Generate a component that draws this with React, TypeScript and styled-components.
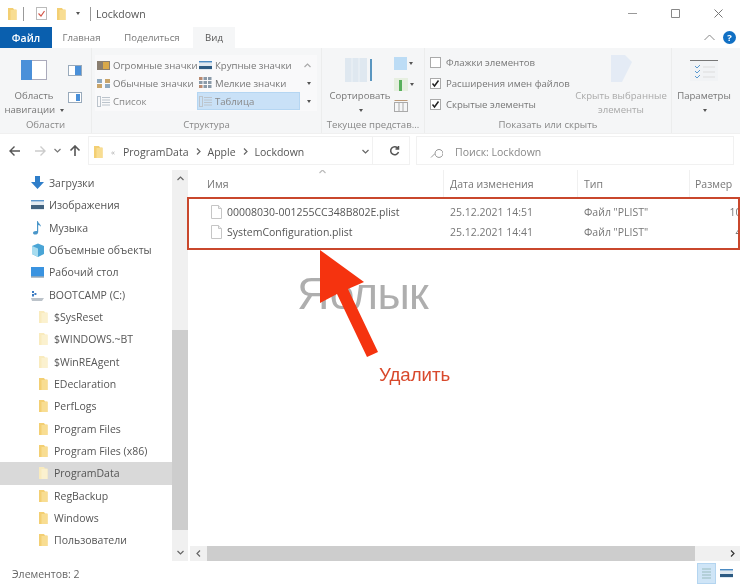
import React from "react";
import styled, { createGlobalStyle } from "styled-components";

const Global = createGlobalStyle`
  html, body { margin: 0; padding: 0; background: #fff; }
  body { font-family: "Open Sans", "Noto Sans", sans-serif; color: #444; }
  * { box-sizing: border-box; }
`;

const Win = styled.div`
  position: relative; width: 740px; height: 584px; overflow: hidden; background: #fff;
  display: flex; flex-direction: column; font-size: 10.5px; filter: blur(0.35px);
`;
const TitleBar = styled.div`
  height: 27px; display: flex; align-items: center; padding-left: 7px; flex: none;
`;
const TitleSep = styled.span`width: 1px; height: 14px; background: #999; margin: 0 ${p => p.$r ?? 10}px 0 ${p => p.$l ?? 7}px;`;
const TitleText = styled.span`font-size: 10.5px; color: #555;`;
const TitleGap = styled.span<{ $w: number }>`width: ${p => p.$w}px; flex: none;`;
const WinControls = styled.div`margin-left: auto; display: flex; align-items: center; padding-right: 0;`;
const WinButton = styled.span`width: 43px; height: 27px; display: flex; align-items: center; justify-content: center;`;

const TabBar = styled.div`height: 21px; display: flex; align-items: stretch; flex: none; position: relative;`;
const FileTab = styled.div`
  width: 52px; background: #0a5fae; color: #fff; font-weight: 600; display: flex; align-items: center; justify-content: center; font-size: 10.5px;
`;
const Tab = styled.div<{ $active?: boolean; $w: number }>`
  display: flex; align-items: center; justify-content: center; width: ${p => p.$w}px; color: ${p => p.$active ? "#555" : "#777"};
  background: ${p => p.$active ? "#f5f6f7" : "transparent"};
  font-size: 9.6px;
`;
const TabRight = styled.div`margin-left: auto; display: flex; align-items: center; gap: 8px; padding-right: 4px;`;
const HelpDot = styled.span`
  width: 13px; height: 13px; border-radius: 50%; background: #1170c4; color: #fff; font-size: 9.5px; font-weight: 700;
  display: flex; align-items: center; justify-content: center;
`;

const Ribbon = styled.div`
  height: 86px; background: #f5f6f7; display: flex; flex: none; border-bottom: 1px solid #f0f0f0; font-size: 9.6px;
`;
const Group = styled.div<{ $w: number; $last?: boolean }>`
  width: ${p => p.$w}px; flex: none; display: flex; flex-direction: column; height: 100%;
  border-right: ${p => p.$last ? "none" : "1px solid #eceded"}; position: relative;
`;
const GroupBody = styled.div`flex: 1; display: flex; min-height: 0;`;
const GroupLabel = styled.div`height: 16px; text-align: center; line-height: 16px; color: #888; white-space: nowrap;`;

const BigButton = styled.div<{ $w: number; $top: number; $left?: number; $dim?: boolean }>`
  width: ${p => p.$w}px; flex: none; display: flex; flex-direction: column; align-items: center;
  padding-top: ${p => p.$top}px; margin-left: ${p => p.$left ?? 0}px;
  color: ${p => p.$dim ? "#aaa" : "#777"}; text-align: center; line-height: 14px;
`;
const BigLabel = styled.div<{ $top: number }>`margin-top: ${p => p.$top}px; white-space: nowrap;`;
const PaneColumn = styled.div`display: flex; flex-direction: column; gap: 16px; padding-top: 17px;`;
const Caret = styled.i`
  display: inline-block; border: 2px solid transparent; border-top: 3px solid #555; border-bottom: 0; vertical-align: middle; margin-left: 2px;
`;

const Gallery = styled.div`
  margin: 7px 0 0 3px; width: 222px; height: 56px; display: grid; grid-template-columns: 102px 103px 15px; grid-auto-rows: 18px;
  background: #f9f9fa; padding-top: 1px;
`;
const GalleryItem = styled.div<{ $sel?: boolean; $dim?: boolean }>`
  display: flex; align-items: center; gap: 3px; padding-left: 2px; color: ${p => p.$dim ? "#888" : "#777"}; white-space: nowrap;
  background: ${p => p.$sel ? "#c9e1f7" : "transparent"};
  box-shadow: ${p => p.$sel ? "inset 0 0 0 1px #b5d6f2" : "none"};
  svg { flex: none; }
`;
const GalleryScroll = styled.div`display: flex; align-items: center; justify-content: center;`;

const SmallColumn = styled.div`display: flex; flex-direction: column; gap: 7px; padding-top: 8px; margin-left: 0;`;
const SmallIconRow = styled.div`display: flex; align-items: center; height: 14px;`;

const CheckColumn = styled.div`width: 150px; flex: none; padding: 6px 0 0 5px; display: flex; flex-direction: column; gap: 5px;`;
const CheckRow = styled.div`display: flex; align-items: center; gap: 5px; height: 16px; color: #777; white-space: nowrap;`;
const CheckBox = styled.span`
  width: 11px; height: 11px; border: 1px solid #aaa; background: #fff; display: flex; align-items: center; justify-content: center; flex: none;
`;

const AddressRow = styled.div`height: 33px; display: flex; align-items: stretch; padding: 2px 6px 2px 0; flex: none;`;
const NavButtons = styled.div`width: 88px; display: flex; align-items: center; flex: none; padding-left: 9px; gap: 7px;`;
const ForwardSlot = styled.span`margin-left: 6px; display: flex;`;
const AddressBox = styled.div`
  width: 285px; border: 1px solid #f1f1f1; display: flex; align-items: center; padding: 2px 0 0 4px; font-size: 10.5px; color: #555; flex: none;
`;
const Crumb = styled.span`color: #555; white-space: nowrap;`;
const CrumbMore = styled.span`width: 12px; color: #aaa; font-size: 8px; margin-left: 8px; margin-right: 0;`;
const CrumbSep = styled.span`margin: 0 5px; color: #777; display: flex;`;
const AddressEnd = styled.span`margin-left: auto; padding-right: 2px; display: flex;`;
const RefreshBox = styled.div`
  width: 37px; border: 1px solid #f1f1f1; border-left: none; display: flex; align-items: center; justify-content: center; flex: none; padding-left: 7px;
`;
const SearchBox = styled.div`
  margin-left: 6px; flex: 1; border: 1px solid #f1f1f1; display: flex; align-items: center; padding: 2px 0 0 13px; gap: 12px; color: #888;
`;

const Main = styled.div`flex: 1; display: flex; min-height: 0; padding-top: 3px;`;
const NavPane = styled.div`width: 172px; flex: none; display: flex; flex-direction: column; padding-top: 2px;`;
const NavRow = styled.div<{ $sub?: boolean; $sel?: boolean }>`
  height: 22.33px; flex: none; display: flex; align-items: center; padding-left: ${p => p.$sub ? 38 : 30}px; gap: ${p => p.$sub ? 6 : 4}px;
  background: ${p => p.$sel ? "#d9d9d9" : "transparent"}; color: #555; white-space: nowrap; font-size: 10.5px;
`;
const VScroll = styled.div`
  width: 16px; flex: none; height: 391px; background: #f0f0f0; display: flex; flex-direction: column; justify-content: space-between; align-items: center;
  position: relative;
`;
const ScrollEnd = styled.div`height: 17px; display: flex; align-items: center; justify-content: center;`;
const VThumb = styled.div`position: absolute; left: 0; right: 0; top: 160px; height: 200px; background: #cdcdcd;`;

const Content = styled.div`flex: 1; min-width: 0; display: flex; flex-direction: column; position: relative; overflow: hidden; height: 391px;`;
const Header = styled.div`
  height: 27px; display: grid; grid-template-columns: 256px 134px 112px 67px; align-items: center; position: relative; flex: none; color: #777;
`;
const HeaderCell = styled.div<{ $pad?: number }>`
  height: 100%; display: flex; align-items: center; padding-left: ${p => p.$pad ?? 5}px; border-right: 1px solid #f0f0f0; white-space: nowrap;
`;
const SortCaret = styled.span`position: absolute; left: 130px; top: -3px; display: flex;`;
const FileList = styled.div`flex: 1; padding-top: 5px; min-height: 0;`;
const FileRow = styled.div`
  height: 20px; display: grid; grid-template-columns: 256px 134px 112px 67px; align-items: center; color: #777; white-space: nowrap;
`;
const NameCell = styled.div`display: flex; align-items: center; gap: 4px; padding-left: 22px; color: #555;`;
const DateCell = styled.div`padding-left: 6px;`;
const TypeCell = styled.div`padding-left: 6px;`;
const SizeCell = styled.div`text-align: right;`;
const HScroll = styled.div`height: 15px; flex: none; background: #f0f0f0; display: flex; align-items: center; margin-left: 2px;`;
const HStart = styled.div`width: 17px; flex: none; display: flex; align-items: center; justify-content: center;`;
const HEnd = styled.div`width: 45px; flex: none; display: flex; align-items: center; justify-content: flex-end; padding-right: 3px;`;
const HThumb = styled.div`flex: 1; height: 100%; background: #cdcdcd;`;

const StatusBar = styled.div`height: 22px; flex: none; display: flex; align-items: center; padding: 1px 0 0 12px; color: #666; font-size: 10.5px;`;
const ViewButtons = styled.div`margin-left: auto; display: flex; align-items: center; padding-right: 7px; gap: 4px; height: 100%;`;
const ViewBtn = styled.span<{ $sel?: boolean }>`
  width: 19px; height: 21px; display: flex; align-items: center; justify-content: center;
  background: ${p => p.$sel ? "#cfe5f7" : "transparent"}; border: ${p => p.$sel ? "1px solid #b4d5f0" : "none"};
`;

const RedFrame = styled.div`
  position: absolute; left: 187px; top: 197px; width: 553px; height: 53px; border: 2px solid #c9472c; pointer-events: none;
`;
const Watermark = styled.div`
  position: absolute; left: 297px; top: 264px; font-family: "Liberation Sans", sans-serif; font-size: 45px; line-height: 60px; letter-spacing: -0.7px; color: rgba(125,125,125,.62); font-weight: 400;
`;
const DeleteLabel = styled.div`
  position: absolute; left: 379px; top: 362px; font-family: "Liberation Sans", sans-serif; font-size: 18.7px; line-height: 26px; color: #d8492c;
`;
const ArrowLayer = styled.svg`position: absolute; left: 0; top: 0; pointer-events: none;`;

const Folder = ({ pale }: { pale?: boolean }) => (
  <svg width="10" height="14" viewBox="0 0 10 14">
    <path d="M1 1h5l1 1.5h2.5V13H1z" fill={pale ? "#f9ebbe" : "#f3cf73"} />
    <path d="M3.5 3H9.5V13H3.5z" fill={pale ? "#fbf1cf" : "#f8dd92"} />
  </svg>
);
const Doc = () => (
  <svg width="13" height="14" viewBox="0 0 13 14">
    <path d="M1.5.5h7l3 3v10h-10z" fill="#fff" stroke="#c6c6c6" />
    <path d="M8.5.5v3h3" fill="#eee" stroke="#c6c6c6" />
  </svg>
);
const Chev = ({ d, c = "#666" }: { d: "up" | "down" | "left" | "right"; c?: string }) => {
  const p = { up: "M1.5 6 L4.5 3 L7.5 6", down: "M1.5 3 L4.5 6 L7.5 3", left: "M6 1.5 L3 4.5 L6 7.5", right: "M3 1.5 L6 4.5 L3 7.5" }[d];
  return <svg width="9" height="9" viewBox="0 0 9 9"><path d={p} fill="none" stroke={c} strokeWidth="1.2" /></svg>;
};
const Pane = ({ wide }: { wide?: boolean }) => (
  <svg width="14" height="11" viewBox="0 0 14 11">
    <rect x=".5" y=".5" width="13" height="10" fill="#fff" stroke="#9ab" />
    <rect x={wide ? 7 : 8} y={wide ? 1 : 2} width={wide ? 6 : 4} height={wide ? 9 : 7} fill="#4a90d9" />
  </svg>
);
const Thumb = ({ kind }: { kind: number }) => {
  if (kind === 0) return <svg width="13" height="9" viewBox="0 0 13 9"><rect width="13" height="9" fill="#8a7f70" /><rect x="6" y="1" width="6" height="7" fill="#d9a94a" /></svg>;
  if (kind === 1) return <svg width="13" height="9" viewBox="0 0 13 9"><rect width="13" height="9" fill="#dfe8f0" /><rect y="5" width="13" height="3" fill="#2c5a82" /><rect y="0" width="13" height="1.4" fill="#4a8ac2" /></svg>;
  if (kind === 2) return <svg width="13" height="9" viewBox="0 0 13 9"><rect x="0" y="0" width="5" height="4" fill="#8fa9bf" /><rect x="8" y="0" width="5" height="4" fill="#c9a56a" /><rect x="0" y="5" width="5" height="4" fill="#c9a56a" /><rect x="8" y="5" width="5" height="4" fill="#8fa9bf" /></svg>;
  if (kind === 3) return <svg width="13" height="12" viewBox="0 0 13 12">{[0, 4, 8].flatMap(y => [0, 4.5, 9].map(x => <rect key={`${x}-${y}`} x={x} y={y} width="3.5" height="3" fill={(x + y) % 8 ? "#8a9aa8" : "#b98a70"} />))}</svg>;
  return <svg width="13" height="11" viewBox="0 0 13 11" fill="none" stroke="#bcc4cc"><rect x=".5" y=".5" width="3" height="10" /><path d="M5 1.5h8M5 4h8M5 6.5h8M5 9h8" /></svg>;
};
const Mono = ({ d, w = 14, h = 14, c = "#555", sw = 1.4 }: { d: string; w?: number; h?: number; c?: string; sw?: number }) => (
  <svg width={w} height={h} viewBox={`0 0 ${w} ${h}`}><path d={d} fill="none" stroke={c} strokeWidth={sw} /></svg>
);

const navItems = [
  ["Загрузки", "dl"], ["Изображения", "img"], ["Музыка", "mus"], ["Объемные объекты", "3d"], ["Рабочий стол", "desk"], ["BOOTCAMP (C:)", "drive"],
];
const folders: [string, boolean?][] = [["$SysReset", true], ["$WINDOWS.~BT", true], ["$WinREAgent", true], ["EDeclaration"], ["PerfLogs"], ["Program Files"], ["Program Files (x86)"], ["ProgramData", true], ["RegBackup"], ["Windows"], ["Пользователи"]];

const NavIcon = ({ k }: { k: string }) => {
  const s = { width: 15, height: 14, viewBox: "0 0 15 14" };
  if (k === "dl") return <svg {...s}><path d="M5 0h5v6h4l-6.5 7L1 6h4z" fill="#2f7ec9" /></svg>;
  if (k === "img") return <svg {...s}><rect x="1" y="2" width="13" height="10" fill="#e3ebf2" /><rect x="1" y="7" width="13" height="4" fill="#41627f" /><rect x="1" y="2" width="13" height="1.4" fill="#5a96cc" /></svg>;
  if (k === "mus") return <svg {...s}><path d="M7 0l1 .2c.2 2 3 3 3 5.5-.8-1-1.8-1.6-2.8-1.8V11c0 1.6-1.4 2.6-3 2.6S3 13 3 11.8 4.5 9.7 7 10z" fill="#4a96c9" /></svg>;
  if (k === "3d") return <svg {...s}><path d="M2 3l6-2.5L14 3v8l-6 3-6-3z" fill="#4aa5d6" /><path d="M2 3l6 2.5V14l-6-3z" fill="#a7dcef" /></svg>;
  if (k === "desk") return <svg {...s}><rect x="1" y="2" width="13" height="9.5" fill="#3a93e0" /><rect x="1" y="11.5" width="13" height="1" fill="#6a8296" /></svg>;
  return <svg {...s}><path d="M1 10h13l-2 3H2z" fill="#bcc3ca" /><rect x="2" y="3" width="2" height="2" fill="#3d7cc2" /><rect x="4.4" y="5" width="2" height="2" fill="#3d7cc2" /><rect x="2" y="6" width="2" height="2.5" fill="#3d7cc2" /></svg>;
};

export default function App() {
  return (
    <Win>
      <Global />
      <TitleBar>
        <Folder />
        <TitleSep $l={6} $r={12} />
        <svg width="11" height="13" viewBox="0 0 11 13"><rect x=".5" y=".5" width="10" height="12" fill="#fff" stroke="#bbb" /><path d="M2.5 6.5L5 9l3.5-5" fill="none" stroke="#d4574a" strokeWidth="1.2" /></svg>
        <TitleGap $w={9} />
        <Folder />
        <TitleGap $w={8} />
        <Caret />
        <TitleSep $l={10} $r={5} />
        <TitleText>Lockdown</TitleText>
        <WinControls>
          <WinButton><Mono d="M0 5.5h9" w={9} h={11} c="#999" sw={1} /></WinButton>
          <WinButton><Mono d="M.5.5h8v8h-8z" w={9} h={9} c="#888" sw={1} /></WinButton>
          <WinButton><Mono d="M.5.5l8 8M8.5.5l-8 8" w={9} h={9} c="#777" sw={1} /></WinButton>
        </WinControls>
      </TitleBar>
      <TabBar>
        <FileTab>Файл</FileTab>
        <Tab $w={59}>Главная</Tab>
        <Tab $w={82}>Поделиться</Tab>
        <Tab $w={42} $active>Вид</Tab>
        <TabRight>
          <Mono d="M.5 6l5-5 5 5" w={11} h={7} c="#888" sw={1} />
          <HelpDot>?</HelpDot>
        </TabRight>
      </TabBar>
      <Ribbon>
        <Group $w={92}>
          <GroupBody>
            <BigButton $w={68} $top={12}>
              <svg width="26" height="20" viewBox="0 0 26 20"><rect x=".5" y=".5" width="25" height="19" fill="#fff" stroke="#aab" /><rect width="11" height="20" fill="#4a90d9" /></svg>
              <BigLabel $top={9}>Область<br />навигации <Caret /></BigLabel>
            </BigButton>
            <PaneColumn><Pane wide /><Pane /></PaneColumn>
          </GroupBody>
          <GroupLabel>Области</GroupLabel>
        </Group>
        <Group $w={230}>
          <GroupBody>
            <Gallery>
              <GalleryItem><Thumb kind={0} />Огромные значки</GalleryItem>
              <GalleryItem><Thumb kind={1} />Крупные значки</GalleryItem>
              <GalleryScroll><Chev d="up" c="#aaa" /></GalleryScroll>
              <GalleryItem><Thumb kind={2} />Обычные значки</GalleryItem>
              <GalleryItem><Thumb kind={3} />Мелкие значки</GalleryItem>
              <GalleryScroll><Caret /></GalleryScroll>
              <GalleryItem $dim><Thumb kind={4} />Список</GalleryItem>
              <GalleryItem $sel $dim><Thumb kind={4} />Таблица</GalleryItem>
              <GalleryScroll><Caret /></GalleryScroll>
            </Gallery>
          </GroupBody>
          <GroupLabel>Структура</GroupLabel>
        </Group>
        <Group $w={103}>
          <GroupBody>
            <BigButton $w={68} $top={10} $left={4}>
              <svg width="30" height="24" viewBox="0 0 30 24"><rect x="0" y="0" width="22" height="24" fill="#dfe8f0" /><path d="M7 0v24M14 0v24" stroke="#eef3f7" /><path d="M26 1v22" stroke="#5a96c0" strokeWidth="2" /></svg>
              <BigLabel $top={7}>Сортировать<br /><Caret /></BigLabel>
            </BigButton>
            <SmallColumn>
              <SmallIconRow><svg width="13" height="13" viewBox="0 0 13 13"><rect width="13" height="13" fill="#bcdcf5" /></svg><Caret /></SmallIconRow>
              <SmallIconRow><svg width="14" height="13" viewBox="0 0 14 13"><rect width="14" height="13" fill="#e6efe0" /><rect x="5" y="2" width="3" height="11" fill="#58b05c" /></svg><Caret /></SmallIconRow>
              <SmallIconRow><svg width="14" height="13" viewBox="0 0 14 13" fill="none" stroke="#aaa"><path d="M.5 1.5h13" stroke="#b97" /><rect x=".5" y="3.5" width="13" height="9" /><path d="M5 3.5v9M9 3.5v9" /></svg></SmallIconRow>
            </SmallColumn>
          </GroupBody>
          <GroupLabel>Текущее представ...</GroupLabel>
        </Group>
        <Group $w={247}>
          <GroupBody>
            <CheckColumn>
              <CheckRow><CheckBox />Флажки элементов</CheckRow>
              <CheckRow><CheckBox><Mono d="M1.5 4.5L3.5 7 7.5 1.5" w={9} h={9} c="#222" sw={1.5} /></CheckBox>Расширения имен файлов</CheckRow>
              <CheckRow><CheckBox><Mono d="M1.5 4.5L3.5 7 7.5 1.5" w={9} h={9} c="#222" sw={1.5} /></CheckBox>Скрытые элементы</CheckRow>
            </CheckColumn>
            <BigButton $w={92} $top={7} $dim>
              <svg width="22" height="27" viewBox="0 0 22 27"><path d="M1 0h14l7 7-10 20H1z" fill="#e4ebf5" /></svg>
              <BigLabel $top={7}>Скрыть выбранные<br />элементы</BigLabel>
            </BigButton>
          </GroupBody>
          <GroupLabel>Показать или скрыть</GroupLabel>
        </Group>
        <Group $w={68} $last>
          <GroupBody>
            <BigButton $w={64} $top={12}>
              <svg width="28" height="21" viewBox="0 0 28 21" fill="none"><rect width="28" height="21" fill="#f1f3f5" /><path d="M0 .5h28" stroke="#777" /><path d="M5 6l2 2 3-3M5 11l2 2 3-3M5 16l2 2 3-3" stroke="#5a9ad0" /><path d="M13 7h12M13 12h12M13 17h12" stroke="#ddd" /></svg>
              <BigLabel $top={8}>Параметры<br /><Caret /></BigLabel>
            </BigButton>
          </GroupBody>
        </Group>
      </Ribbon>
      <AddressRow>
        <NavButtons>
          <Mono d="M11 6H1M5.5 1.5L1 6l4.5 4.5" w={12} h={12} c="#555" />
          <ForwardSlot><Mono d="M1 6h10M6.5 1.5L11 6l-4.5 4.5" w={12} h={12} c="#ccc" /></ForwardSlot>
          <Chev d="down" c="#777" />
          <Mono d="M6 11V1M1.5 5.5L6 1l4.5 4.5" w={12} h={12} c="#555" sw={1.6} />
        </NavButtons>
        <AddressBox>
          <Folder />
          <CrumbMore>«</CrumbMore>
          <Crumb>ProgramData</Crumb>
          <CrumbSep><Chev d="right" /></CrumbSep>
          <Crumb>Apple</Crumb>
          <CrumbSep><Chev d="right" /></CrumbSep>
          <Crumb>Lockdown</Crumb>
          <AddressEnd><Chev d="down" /></AddressEnd>
        </AddressBox>
        <RefreshBox><Mono d="M10 3.5A4 4 0 1 0 10.5 7M10.5 1v3H7.5" w={13} h={12} c="#555" sw={1.5} /></RefreshBox>
        <SearchBox>
          <Mono d="M5 8.5L1 12.5M5 8.5a4 4 0 1 0 0-.1" w={13} h={13} c="#999" sw={1} />
          Поиск: Lockdown
        </SearchBox>
      </AddressRow>
      <Main>
        <NavPane>
          {navItems.map(([t, k]) => <NavRow key={t}><NavIcon k={k} />{t}</NavRow>)}
          {folders.map(([t, pale]) => <NavRow key={t} $sub $sel={t === "ProgramData"}><Folder pale={pale} />{t}</NavRow>)}
        </NavPane>
        <VScroll>
          <VThumb />
          <ScrollEnd><Chev d="up" /></ScrollEnd>
          <ScrollEnd><Chev d="down" /></ScrollEnd>
        </VScroll>
        <Content>
          <Header>
            <SortCaret><Chev d="up" c="#bbb" /></SortCaret>
            <HeaderCell $pad={19}>Имя</HeaderCell>
            <HeaderCell $pad={6}>Дата изменения</HeaderCell>
            <HeaderCell $pad={6}>Тип</HeaderCell>
            <HeaderCell $pad={5}>Размер</HeaderCell>
          </Header>
          <FileList>
            <FileRow>
              <NameCell><Doc />00008030-001255CC348B802E.plist</NameCell>
              <DateCell>25.12.2021 14:51</DateCell>
              <TypeCell>Файл "PLIST"</TypeCell>
              <SizeCell>10 КБ</SizeCell>
            </FileRow>
            <FileRow>
              <NameCell><Doc />SystemConfiguration.plist</NameCell>
              <DateCell>25.12.2021 14:41</DateCell>
              <TypeCell>Файл "PLIST"</TypeCell>
              <SizeCell>4 КБ</SizeCell>
            </FileRow>
          </FileList>
          <HScroll>
            <HStart><Chev d="left" /></HStart>
            <HThumb />
            <HEnd><Chev d="right" c="#333" /></HEnd>
          </HScroll>
        </Content>
      </Main>
      <StatusBar>
        Элементов: 2
        <ViewButtons>
          <ViewBtn $sel><Mono d="M3 2h9M3 5h9M3 8h9M3 11h9" w={15} h={13} c="#9bb" sw={1} /></ViewBtn>
          <Thumb kind={1} />
        </ViewButtons>
      </StatusBar>

      <Watermark>Яблык</Watermark>
      <RedFrame />
      <ArrowLayer width="740" height="584" viewBox="0 0 740 584">
        <path d="M320 250L364 282L348 289L378 352L367 357L337 294L320 303z" fill="#f5330f" />
      </ArrowLayer>
      <DeleteLabel>Удалить</DeleteLabel>
    </Win>
  );
}
